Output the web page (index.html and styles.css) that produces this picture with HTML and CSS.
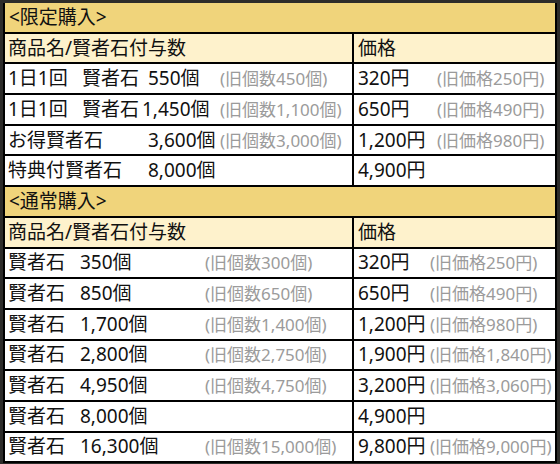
FILE: index.html
```html
<!DOCTYPE html>
<html lang="ja">
<head>
<meta charset="utf-8">
<link rel="stylesheet" href="styles.css">
</head>
<body>
<div class="tbl">
  <div class="row sec"><div class="cell full">&lt;限定購入&gt;</div></div>
  <div class="row head"><div class="cell l">商品名/賢者石付与数</div><div class="cell r">価格</div></div>
  <div class="row">
    <div class="cell l"><span class="d">1日1回</span><span class="n1">賢者石</span><span class="c1">550個</span><span class="old">(旧個数450個)</span></div>
    <div class="cell r"><span class="p1">320円</span><span class="old">(旧価格250円)</span></div>
  </div>
  <div class="row">
    <div class="cell l"><span class="d">1日1回</span><span class="n1 t">賢者石</span><span class="c1 t">1,450個</span><span class="old">(旧個数1,100個)</span></div>
    <div class="cell r"><span class="p1">650円</span><span class="old">(旧価格490円)</span></div>
  </div>
  <div class="row">
    <div class="cell l"><span class="n0">お得賢者石</span><span class="c1">3,600個</span><span class="old">(旧個数3,000個)</span></div>
    <div class="cell r"><span class="p1">1,200円</span><span class="old">(旧価格980円)</span></div>
  </div>
  <div class="row">
    <div class="cell l"><span class="n0">特典付賢者石</span><span class="c1">8,000個</span></div>
    <div class="cell r"><span class="p1">4,900円</span></div>
  </div>
  <div class="row sec"><div class="cell full">&lt;通常購入&gt;</div></div>
  <div class="row head"><div class="cell l">商品名/賢者石付与数</div><div class="cell r">価格</div></div>
  <div class="row">
    <div class="cell l"><span class="n2">賢者石</span><span class="c2">350個</span><span class="old">(旧個数300個)</span></div>
    <div class="cell r"><span class="p2">320円</span><span class="old">(旧価格250円)</span></div>
  </div>
  <div class="row">
    <div class="cell l"><span class="n2">賢者石</span><span class="c2">850個</span><span class="old">(旧個数650個)</span></div>
    <div class="cell r"><span class="p2">650円</span><span class="old">(旧価格490円)</span></div>
  </div>
  <div class="row">
    <div class="cell l"><span class="n2">賢者石</span><span class="c2">1,700個</span><span class="old">(旧個数1,400個)</span></div>
    <div class="cell r"><span class="p2">1,200円</span><span class="old">(旧価格980円)</span></div>
  </div>
  <div class="row">
    <div class="cell l"><span class="n2">賢者石</span><span class="c2">2,800個</span><span class="old">(旧個数2,750個)</span></div>
    <div class="cell r"><span class="p2">1,900円</span><span class="old">(旧価格1,840円)</span></div>
  </div>
  <div class="row">
    <div class="cell l"><span class="n2">賢者石</span><span class="c2">4,950個</span><span class="old">(旧個数4,750個)</span></div>
    <div class="cell r"><span class="p2">3,200円</span><span class="old">(旧価格3,060円)</span></div>
  </div>
  <div class="row">
    <div class="cell l"><span class="n2">賢者石</span><span class="c2">8,000個</span></div>
    <div class="cell r"><span class="p2">4,900円</span></div>
  </div>
  <div class="row">
    <div class="cell l"><span class="n2">賢者石</span><span class="c2">16,300個</span><span class="old">(旧個数15,000個)</span></div>
    <div class="cell r"><span class="p2">9,800円</span><span class="old">(旧価格9,000円)</span></div>
  </div>
</div>
</body>
</html>
```
FILE: styles.css
```css
html, body {
  margin: 0;
  padding: 0;
}
body {
  background: #2d2c2a;
  width: 560px;
  height: 464px;
  overflow: hidden;
  font-family: "Noto Sans", "Noto Sans CJK JP", sans-serif;
}
.tbl {
  margin: 3px 3px 0 3px;
  width: 554px;
  box-sizing: border-box;
  border-left: 2px solid #000;
  border-right: 2px solid #000;
}
.row {
  display: flex;
  height: 30.7px;
  box-sizing: border-box;
  border-bottom: 2px solid #000;
  background: #fff;
}
.sec { background: #f0d47b; }
.head { background: #fef2cc; }
.cell {
  display: flex;
  align-items: center;
  padding: 0 3px;
  white-space: nowrap;
  overflow: hidden;
  font-size: 19px;
  line-height: 1;
  color: #111;
  box-sizing: border-box;
}
.cell.full { flex: 1; padding-left: 4px; }
.cell.l {
  width: 349px;
  flex: none;
  border-right: 2px solid #000;
}
.cell.r { flex: 1; padding-left: 4px; }
.d, .n0, .n1, .c1, .n2, .c2, .p1, .p2 { flex: none; }
.d { width: 74px; }
.n1 { width: 66px; }
.n0 { width: 140px; }
.c1 { width: 72px; }
.n1.t { width: 60px; }
.c1.t { width: 78px; }
.n2 { width: 72px; }
.c2 { width: 125px; }
.p1 { width: 79px; }
.p2 { width: 72px; }
.old {
  font-size: 17px;
  color: #9b9b9b;
}
```
